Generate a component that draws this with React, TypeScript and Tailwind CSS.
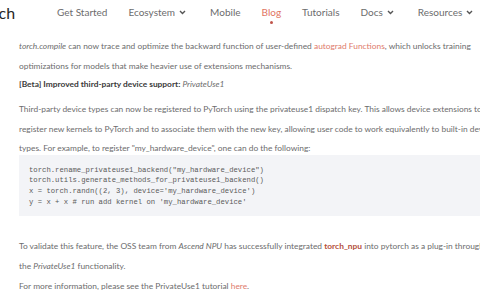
import React from "react";

const navItems = [
  { label: "Get Started" },
  { label: "Ecosystem", menu: true },
  { label: "Mobile" },
  { label: "Blog", active: true },
  { label: "Tutorials" },
  { label: "Docs", menu: true },
  { label: "Resources", menu: true },
];

const Chevron = () => (
  <svg width="7" height="5" viewBox="0 0 7 5" className="ml-[4px] mr-[3px] mt-[1px]">
    <path d="M1 1l2.5 2.5L6 1" fill="none" stroke="#555" strokeWidth="1.4" />
  </svg>
);

const codeLines = [
  'torch.rename_privateuse1_backend("my_hardware_device")',
  "torch.utils.generate_methods_for_privateuse1_backend()",
  "x = torch.randn((2, 3), device='my_hardware_device')",
  "y = x + x # run add kernel on 'my_hardware_device'",
];

const App: React.FC = () => {
  return (
    <div
      className="w-[480px] h-[300px] overflow-hidden bg-white text-[#6c6c6d]"
      style={{ fontFamily: "Lato, 'Open Sans', sans-serif" }}
    >
      {/* header */}
      <header className="h-[30px] flex items-start pt-[4px] whitespace-nowrap">
        <div className="ml-[-40px] w-[51px] shrink-0 text-[16px] leading-[18px] text-[#262626]">PyTorch</div>
        <nav className="flex items-start gap-[21px] ml-[46px] text-[10px] leading-[16px] text-[#6c6c6d]">
          {navItems.map((item) => (
            <div key={item.label} className="flex flex-col items-center">
              <div className={`flex items-center ${item.active ? "text-[#e17462]" : ""}`}>
                {item.label}
                {item.menu && <Chevron />}
              </div>
              {item.active && <div className="w-[3px] h-[3px] rounded-full bg-[#c0544a] mt-[1px]" />}
            </div>
          ))}
        </nav>
      </header>

      {/* article */}
      <article className="pl-[19px] w-[600px] text-[8.4px] whitespace-nowrap">
        <div className="leading-[20px] mt-[6px]">
          <div>
            <i>torch.compile</i> can now trace and optimize the backward function of user-defined{" "}
            <span className="text-[#e07b6c]">autograd Functions</span>, which unlocks training
          </div>
          <div>optimizations for models that make heavier use of extensions mechanisms.</div>
        </div>

        <div className="leading-[16px] font-bold text-[#3a3a3a]">
          [Beta] Improved third-party device support: <i className="font-normal text-[#6c6c6d]">PrivateUse1</i>
        </div>

        <div className="mt-[8px] leading-[19.5px]">
          <div>
            Third-party device types can now be registered to PyTorch using the privateuse1 dispatch key. This allows device
            extensions to
          </div>
          <div>
            register new kernels to PyTorch and to associate them with the new key, allowing user code to work equivalently to
            built-in device
          </div>
          <div>types. For example, to register "my_hardware_device", one can do the following:</div>
        </div>

        <pre
          className="mt-[-4px] bg-[#f3f4f7] pl-[10px] pt-[10px] pb-[9px] text-[7.25px] leading-[10.7px] text-[#5a5a5a]"
          style={{ fontFamily: "'Liberation Mono', monospace" }}
        >
          {codeLines.join("\n")}
        </pre>

        <div className="mt-[21px] leading-[19.5px]">
          <div>
            To validate this feature, the OSS team from <i>Ascend NPU</i> has successfully integrated{" "}
            <b className="text-[#b4503c]">torch_npu</b> into pytorch as a plug-in through
          </div>
          <div>
            the <i>PrivateUse1</i> functionality.
          </div>
        </div>

        <div className="mt-[1px] leading-[19.5px]">
          For more information, please see the PrivateUse1 tutorial <span className="text-[#e07b6c]">here</span>.
        </div>
      </article>
    </div>
  );
};

export default App;
